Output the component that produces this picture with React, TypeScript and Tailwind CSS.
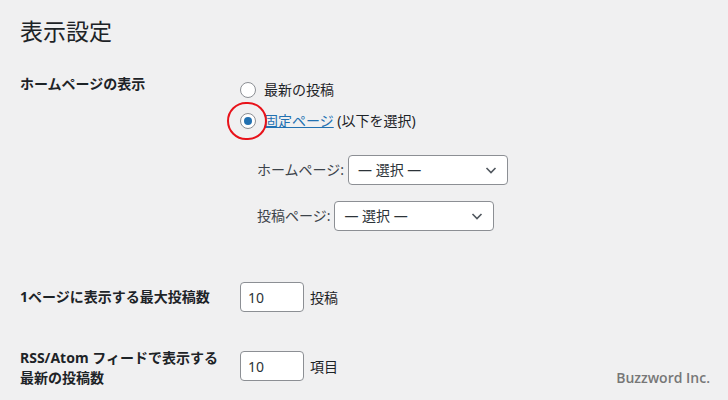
const font = { fontFamily: '"Noto Sans", "Noto Sans CJK JP", sans-serif' }

function Radio({ checked }: { checked?: boolean }) {
  return (
    <span className="flex h-4 w-4 shrink-0 items-center justify-center rounded-full border border-[#8c8f94] bg-white">
      {checked && <span className="h-2 w-2 rounded-full bg-[#2271b1]" />}
    </span>
  )
}

function Select({ width }: { width: string }) {
  return (
    <div
      className={`flex h-[30px] ${width} items-center justify-between rounded-[4px] border border-[#8c8f94] bg-white pl-[9px] pr-[8px] text-[14px] text-[#2c3338]`}
    >
      <span>— 選択 —</span>
      <svg width="16" height="16" viewBox="0 0 16 16" fill="none">
        <path d="M3.5 6 L8 10.5 L12.5 6" stroke="#50575e" strokeWidth="1.6" />
      </svg>
    </div>
  )
}

function NumberInput() {
  return (
    <div className="flex h-[30px] w-[64px] items-center rounded-[4px] border border-[#8c8f94] bg-white pl-[7px] text-[14px] text-[#2c3338]">
      10
    </div>
  )
}

export default function App() {
  return (
    <div className="relative h-[400px] w-[728px] overflow-hidden bg-[#f0f0f1] text-[#1d2327]" style={font}>
      <div className="pl-5 pt-[17px]">
        <h1 className="text-[23px] font-normal leading-[29px]">表示設定</h1>

        {/* ホームページの表示 */}
        <div className="mt-[28px] flex">
          <div className="w-[220px] text-[14px] font-bold leading-5">ホームページの表示</div>
          <div className="text-[14px] leading-5">
            <label className="mt-[6px] flex items-center gap-2">
              <Radio />
              <span>最新の投稿</span>
            </label>
            <label className="relative mt-[11px] flex items-center gap-2">
              <Radio checked />
              <span>
                <span className="text-[#2271b1] underline">固定ページ</span> (以下を選択)
              </span>
              <span className="absolute left-[-13px] top-[-9px] h-[38px] w-[40px] rounded-full border-2 border-[#e8121a]" />
            </label>
            <div className="ml-[17px] mt-[24px] flex items-center gap-1 text-[#3c434a]">
              <span>ホームページ:</span>
              <Select width="w-[160px]" />
            </div>
            <div className="ml-[17px] mt-[16px] flex items-center gap-1 text-[#3c434a]">
              <span>投稿ページ:</span>
              <Select width="w-[160px]" />
            </div>
          </div>
        </div>

        {/* 1ページに表示する最大投稿数 */}
        <div className="mt-[51px] flex items-center">
          <div className="w-[220px] whitespace-nowrap text-[14px] font-bold leading-5">1ページに表示する最大投稿数</div>
          <NumberInput />
          <span className="ml-[6px] text-[14px]">投稿</span>
        </div>

        {/* RSS */}
        <div className="mt-[36px] flex items-start">
          <div className="w-[220px] whitespace-nowrap text-[14px] font-bold leading-5">
            RSS/Atom フィードで表示する
            <br />
            最新の投稿数
          </div>
          <div className="mt-[3px] flex items-center">
            <NumberInput />
            <span className="ml-[6px] text-[14px]">項目</span>
          </div>
        </div>
      </div>

      <div
        className="absolute bottom-[12px] right-[18px] text-[14px] font-semibold text-[#777777]"
        style={{ fontFamily: '"Open Sans", sans-serif' }}
      >
        Buzzword Inc.
      </div>
    </div>
  )
}
